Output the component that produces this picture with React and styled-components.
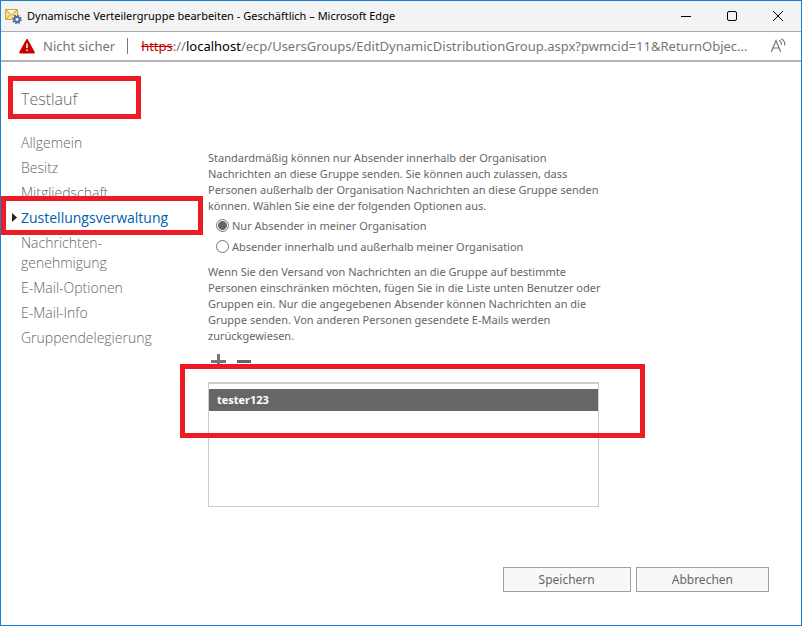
import React from 'react'
import { useState } from 'react';
import styled, { createGlobalStyle } from 'styled-components';

const GlobalStyle=createGlobalStyle`
  *{
    box-sizing:border-box;
  }
  body{
    margin:0;
    background-color:#fff;
    color:#666;
    font-family:"Noto Sans", "Open Sans", sans-serif;
    font-size:11px;
    line-height:16px;
  }
  button, input{
    font:inherit;
    color:inherit;
  }
`;

const Window=styled.div`
  display:flex;
  flex-direction:column;
  min-height:100vh;
  border:1px solid #1a7fd0;
`;

const TitleBar=styled.header`
  display:flex;
  align-items:center;
  height:31px;
  padding-left:4px;
  gap:5px;
  background-color:#f3f3f3;
  border-bottom:1px solid #ababab;
`;

const WindowTitle=styled.h1`
  flex:1;
  margin:0;
  font-size:11px;
  font-weight:400;
  color:#000;
  white-space:nowrap;
`;

const WindowButtons=styled.div`
  display:flex;
`;

const WindowButton=styled.button`
  display:flex;
  align-items:center;
  justify-content:center;
  width:46px;
  height:30px;
  padding:0;
  border:none;
  background:none;
  color:#000;
`;

const AddressBar=styled.div`
  display:flex;
  align-items:center;
  height:30px;
  padding:0 14px 0 18px;
  border-bottom:2px solid #b4b4b4;
  color:#767676;
  font-size:13px;
`;

const Security=styled.span`
  margin-left:7px;
  padding-right:12px;
  border-right:1px solid #767676;
  white-space:nowrap;
`;

const Url=styled.span`
  flex:1;
  min-width:0;
  margin-left:13px;
  overflow:hidden;
  white-space:nowrap;
`;

const Scheme=styled.s`
  color:#c00000;
`;

const Host=styled.span`
  color:#000;
`;

const IconButton=styled.button`
  display:flex;
  padding:0;
  border:none;
  background:none;
`;

const Page=styled.div`
  display:flex;
  flex:1;
  padding-top:25px;
`;

const Sidebar=styled.aside`
  flex:none;
  width:207px;
  padding-left:20px;
  font-family:"Open Sans", "Noto Sans", sans-serif;
`;

// red marker drawn over the part it belongs to
const Marked=styled.div`
  position:relative;

  &::after{
    content:"";
    position:absolute;
    inset:${(props)=>props.$inset};
    border:5px solid #ed1c24;
    pointer-events:none;
    z-index:1;
  }
`;

const GroupName=styled.h2`
  margin:0;
  font-size:16px;
  font-weight:300;
  line-height:24px;
`;

const Nav=styled.nav`
  display:flex;
  flex-direction:column;
  gap:5px;
  width:150px;
  margin-top:22px;
  font-size:14px;
  line-height:20px;
`;

const NavLink=styled.a`
  display:block;
  color:${(props)=>props.$active ? "#0060a9" : "#666"};
  font-weight:${(props)=>props.$active ? "400" : "300"};
  text-decoration:none;
`;

const Arrow=styled.svg`
  position:absolute;
  left:-9px;
  top:5px;
`;

const Form=styled.form`
  display:flex;
  flex-direction:column;
  flex:1;
  padding-right:32px;
`;

const Text=styled.p`
  max-width:402px;
  margin:0;
`;

const Intro=styled(Text)`
  margin-top:63px;
`;

const Options=styled.fieldset`
  margin:1px 0 7px;
  padding:0 0 0 8px;
  border:none;
`;

const Option=styled.label`
  display:flex;
  align-items:center;
  gap:3px;
  height:21px;
`;

const Radio=styled.input`
  appearance:none;
  width:13px;
  height:13px;
  margin:0;
  border:1px solid #767676;
  border-radius:50%;

  &:checked{
    background:radial-gradient(#666 0 4px, #fff 5px);
  }
`;

const Toolbar=styled.div`
  display:flex;
  gap:11px;
  margin:10px 0 14px;
  padding-left:3px;
`;

const List=styled.ul`
  max-width:391px;
  height:125px;
  margin:0;
  padding:5px 0;
  border:1px solid #c8cfd1;
  border-top-width:2px;
  list-style:none;
`;

const ListItem=styled.li`
  padding:3px 8px;
  background-color:#666;
  color:#fff;
  font-family:"Open Sans", "Noto Sans", sans-serif;
  font-weight:700;
`;

const Footer=styled.footer`
  display:flex;
  justify-content:flex-end;
  gap:5px;
  margin-top:auto;
  padding:20px 0 33px;
`;

const Button=styled.button`
  height:25px;
  padding:0 35px;
  border:1px solid #98a3a6;
  background-color:#f8f8f8;
  font-size:12px;
`;

const navItems=[
  "Allgemein",
  "Besitz",
  "Mitgliedschaft",
  "Zustellungsverwaltung",
  "Nachrichten-genehmigung",
  "E-Mail-Optionen",
  "E-Mail-Info",
  "Gruppendelegierung",
];

const MailGearIcon = () => (
  <svg width="17" height="17" viewBox="0 0 17 17" aria-hidden="true">
    <path d="M.5 1.500h12v10H.5z" fill="#fbe08a" stroke="#c9a545" />
    <path d="M1 11l4-4M12 11L8 7" stroke="#c9a545" fill="none" />
    <path d="M1 2l5.500 5L12 2" fill="#fff8d8" stroke="#b9973b" />
    <circle cx="12" cy="11.500" r="2.600" fill="#b9cdec" stroke="#44689f" strokeWidth="1.600" />
    <circle cx="12" cy="11.500" r="4" fill="none" stroke="#44689f" strokeWidth="1.600" strokeDasharray="1.570 1.570" />
    <circle cx="12" cy="11.500" r="1" fill="#fff" />
  </svg>
)

const WarningIcon = () => (
  <svg width="17" height="17" viewBox="0 0 17 17" aria-hidden="true">
    <path d="M8 2L14.800 14.500H1.200z" fill="#c80000" stroke="#c80000" strokeWidth="2" strokeLinejoin="round" />
    <path d="M8 5.500v4.500M8 11.500v1.600" stroke="#fff" strokeWidth="1.500" />
  </svg>
)

const ReadAloudIcon = () => (
  <svg width="17" height="16" viewBox="0 0 17 16" fill="none" stroke="#767676" strokeWidth="1.200" strokeLinecap="round">
    <path d="M1.500 13.500L6 2.500L10.500 13.500M3 10h6" />
    <path d="M9.500 2.500c1.500 1 2 2.200 1.800 3.800M11.500 1c2.600 1.500 3.600 3.700 3.200 6" />
  </svg>
)

const App = () => {
    const [active,setActive]=useState("Zustellungsverwaltung")
    const [senders,setSenders]=useState("internal")

  return (
    <Window>
      <GlobalStyle />
      <TitleBar>
        <MailGearIcon />
        <WindowTitle>Dynamische Verteilergruppe bearbeiten - Geschäftlich – Microsoft Edge</WindowTitle>
        <WindowButtons>
          <WindowButton aria-label="Minimieren">
            <svg width="10" height="10"><path d="M0 5.500h10" stroke="currentColor" /></svg>
          </WindowButton>
          <WindowButton aria-label="Maximieren">
            <svg width="10" height="10"><rect x=".5" y=".5" width="9" height="9" rx="1.500" fill="none" stroke="currentColor" /></svg>
          </WindowButton>
          <WindowButton aria-label="Schließen">
            <svg width="10" height="10"><path d="M0 0l10 10M10 0L0 10" stroke="currentColor" /></svg>
          </WindowButton>
        </WindowButtons>
      </TitleBar>
      <AddressBar>
        <WarningIcon />
        <Security>Nicht sicher</Security>
        <Url>
          <Scheme>https</Scheme>://<Host>localhost</Host>/ecp/UsersGroups/EditDynamicDistributionGroup.aspx?pwmcid=11&amp;ReturnObjec...
        </Url>
        <IconButton aria-label="Laut vorlesen"><ReadAloudIcon /></IconButton>
      </AddressBar>
      <Page>
        <Sidebar>
          <Marked $inset="-11px 67px -8px -13px">
            <GroupName>Testlauf</GroupName>
          </Marked>
          <Nav>
            {navItems.map((item)=>{
              const isActive=item===active;
              const link=(
                <NavLink href="#" key={item} $active={isActive} onClick={()=>setActive(item)}>
                  {isActive && (
                    <Arrow width="5" height="9"><path d="M0 0l5 4.500L0 9z" fill="#222" /></Arrow>
                  )}
                  {item}
                </NavLink>
              );
              return isActive ? <Marked key={item} $inset="-12px -32px -7px -20px">{link}</Marked> : link;
            })}
          </Nav>
        </Sidebar>
        <Form onSubmit={(e)=>e.preventDefault()}>
          <Intro>
            Standardmäßig können nur Absender innerhalb der Organisation Nachrichten an diese Gruppe senden. Sie können auch zulassen, dass Personen außerhalb der Organisation Nachrichten an diese Gruppe senden können. Wählen Sie eine der folgenden Optionen aus.
          </Intro>
          <Options>
            <Option>
              <Radio type="radio" name="senders" checked={senders==="internal"} onChange={()=>setSenders("internal")} />
              Nur Absender in meiner Organisation
            </Option>
            <Option>
              <Radio type="radio" name="senders" checked={senders==="all"} onChange={()=>setSenders("all")} />
              Absender innerhalb und außerhalb meiner Organisation
            </Option>
          </Options>
          <Text>
            Wenn Sie den Versand von Nachrichten an die Gruppe auf bestimmte Personen einschränken möchten, fügen Sie in die Liste unten Benutzer oder Gruppen ein. Nur die angegebenen Absender können Nachrichten an die Gruppe senden. Von anderen Personen gesendete E-Mails werden zurückgewiesen.
          </Text>
          <Toolbar>
            <IconButton type="button" aria-label="Hinzufügen">
              <svg width="15" height="14"><path d="M0 7.500h15M7.500 0v14" stroke="#767676" strokeWidth="3" /></svg>
            </IconButton>
            <IconButton type="button" aria-label="Entfernen">
              <svg width="14" height="14"><path d="M0 7.500h14" stroke="#666" strokeWidth="3" /></svg>
            </IconButton>
          </Toolbar>
          <Marked $inset="-18px 124px 69px -28px">
            <List>
              <ListItem>tester123</ListItem>
            </List>
          </Marked>
          <Footer>
            <Button type="submit">Speichern</Button>
            <Button type="button">Abbrechen</Button>
          </Footer>
        </Form>
      </Page>
    </Window>
  );
}

export default App
